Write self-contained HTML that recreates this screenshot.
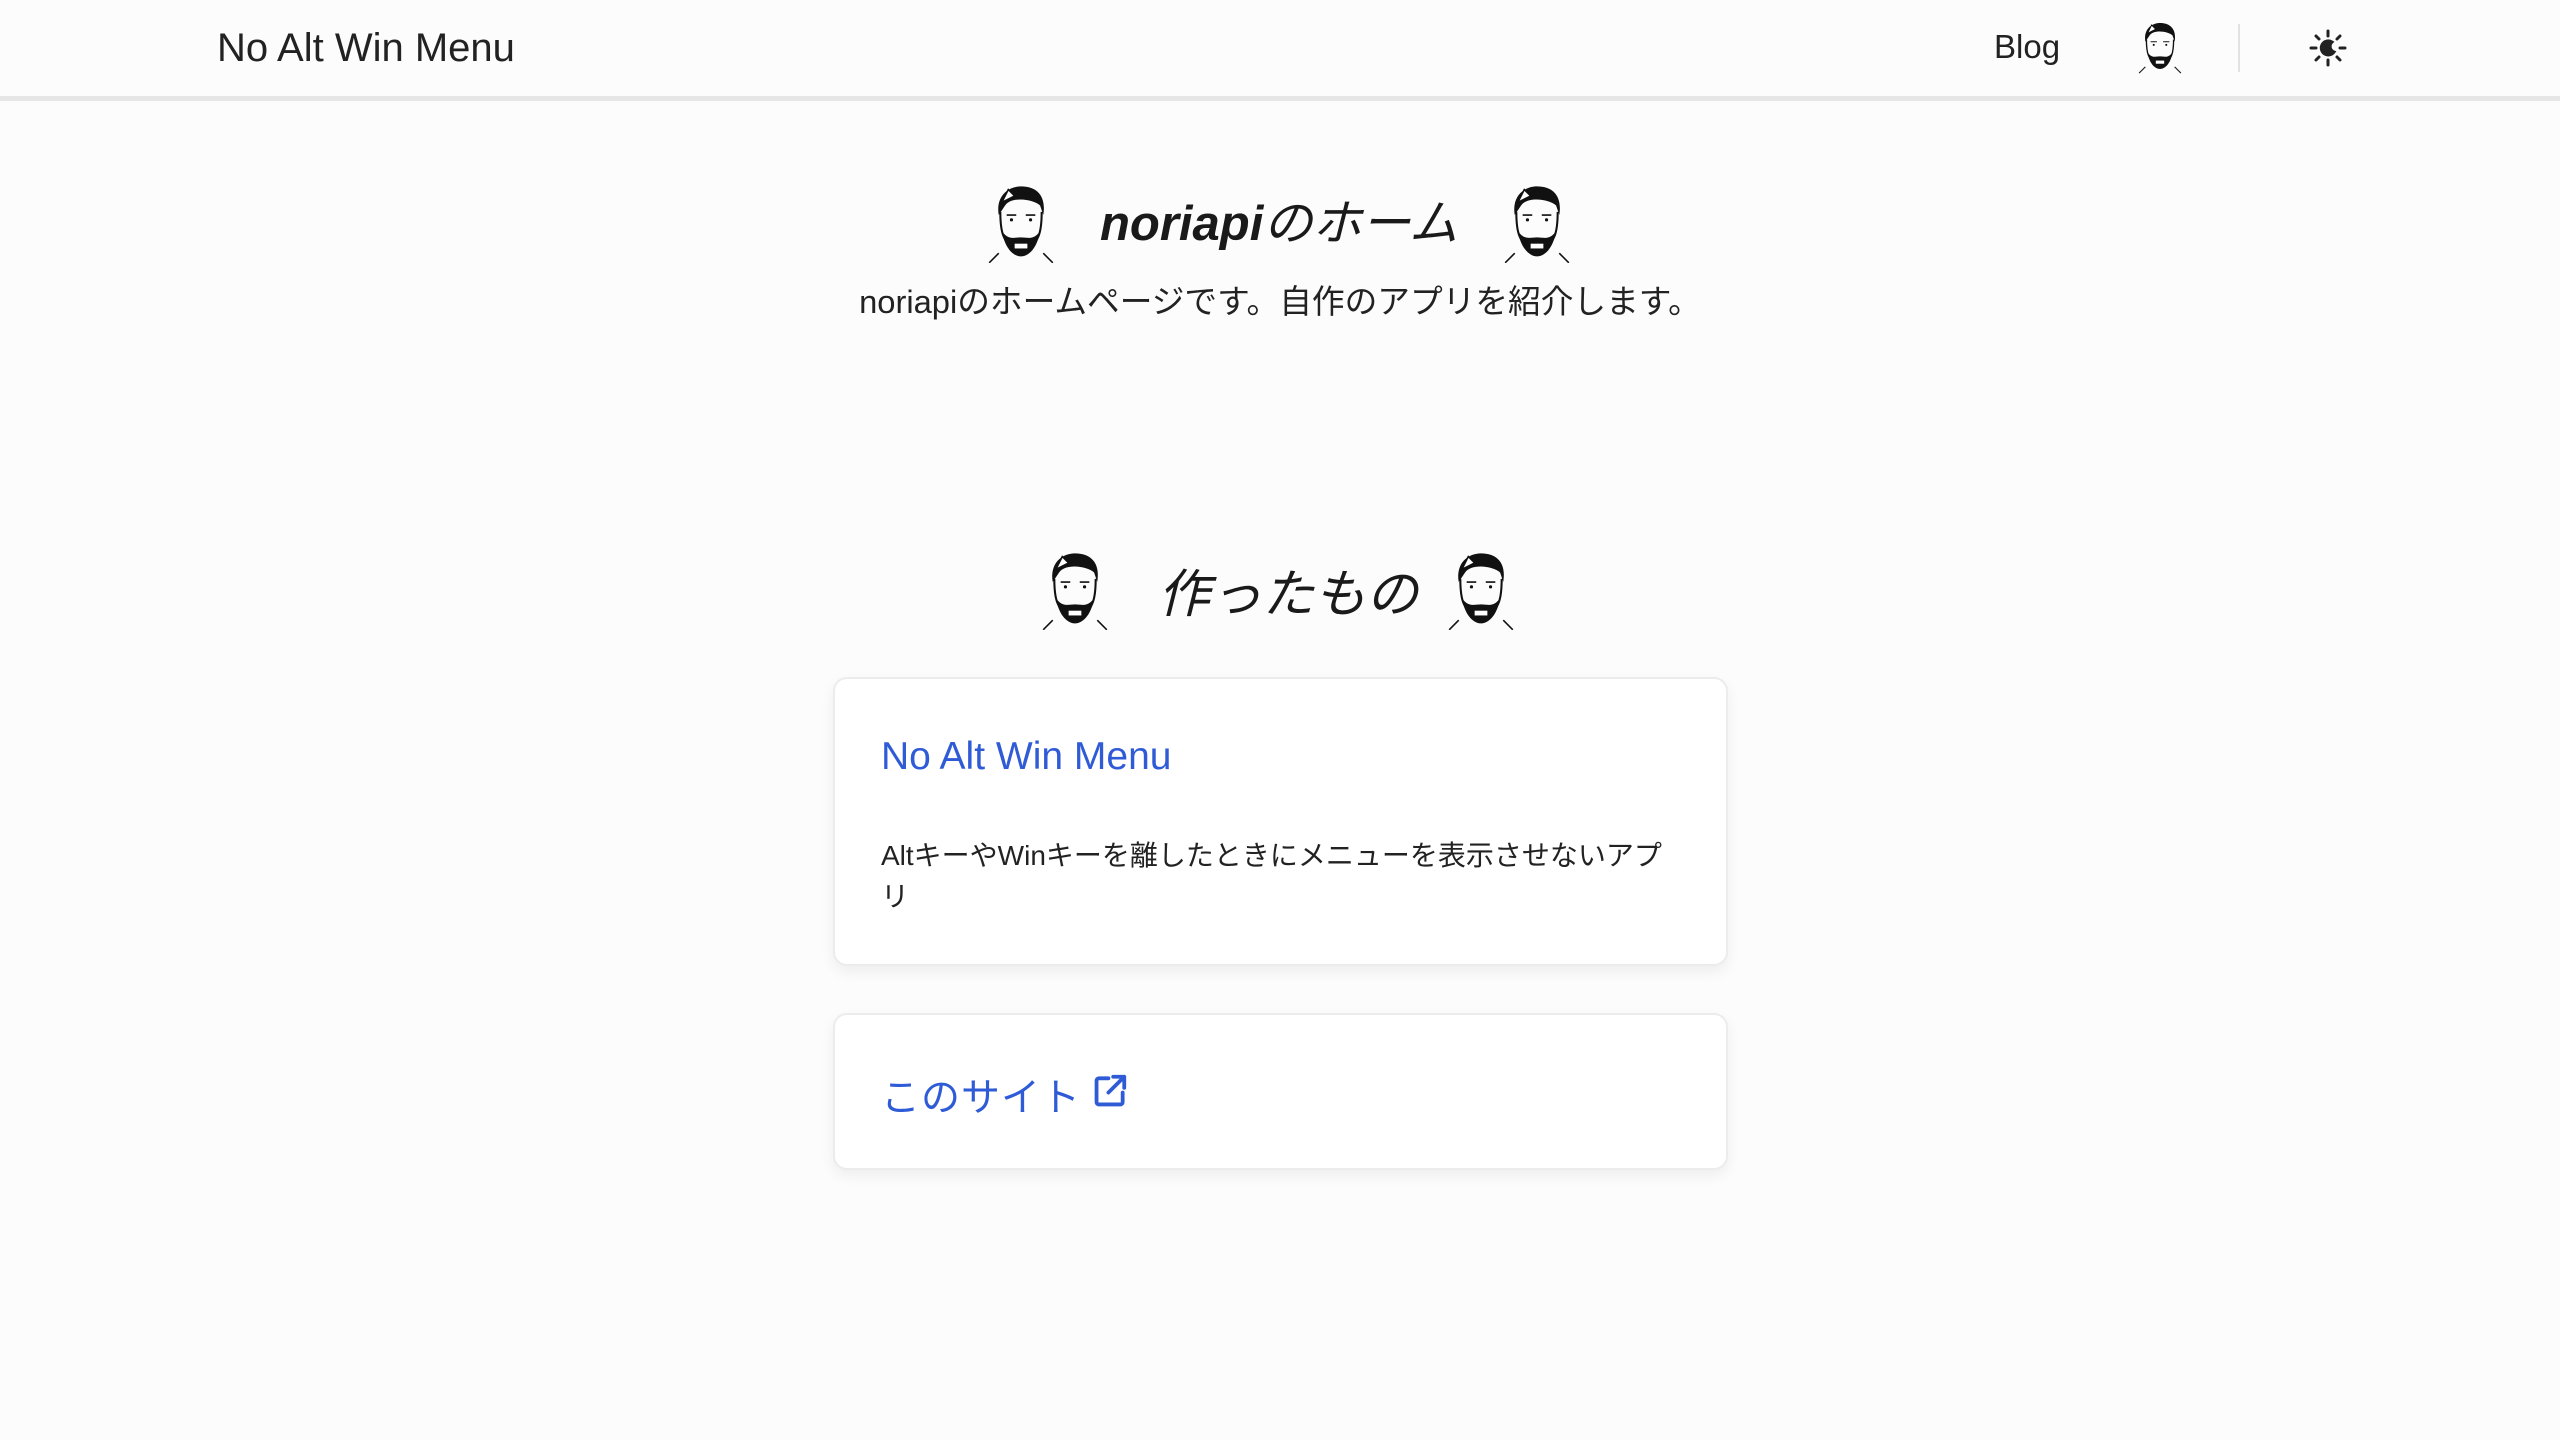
<!DOCTYPE html>
<html><head><meta charset="utf-8"><style>
*{margin:0;padding:0;box-sizing:border-box}
body{width:2560px;height:1440px;background:#fcfcfc;font-family:"Liberation Sans","Noto Sans CJK JP",sans-serif;color:#222;position:relative;overflow:hidden}
.hdr{position:absolute;left:0;top:0;width:2560px;height:101px;border-bottom:5px solid #e6e6e6;background:#fcfcfc}
.abs{position:absolute;white-space:nowrap}
.card{position:absolute;left:833px;width:895px;background:#fff;border:2px solid #ececec;border-radius:14px;box-shadow:0 6px 14px rgba(0,0,0,.06)}
.blue{color:#2f5bd6}
</style></head><body>
<svg width="0" height="0" style="position:absolute"><defs>
<symbol id="face" viewBox="0 0 44 50">
<path d="M8 20 C6 8 14 2 22 2 C32 2 38 8 36 20 L34 14 C30 10 16 8 12 14 Z" fill="#111"/>
<path d="M10 12 L14 4 L18 8 Z" fill="#fff" stroke="#111" stroke-width="1"/>
<path d="M9 18 C9 30 10 38 22 44 C34 38 35 30 35 18" fill="none" stroke="#111" stroke-width="1.3"/>
<path d="M10 30 C12 42 18 46 22 46 C26 46 32 42 34 30 C30 36 26 34 22 34 C18 34 14 36 10 30 Z" fill="#111"/>
<rect x="18" y="38" width="8" height="3" fill="#fff"/>
<circle cx="16" cy="23" r="1" fill="#111"/><circle cx="28" cy="23" r="1" fill="#111"/>
<path d="M13 20 h6 M25 20 h6" stroke="#111" stroke-width="1"/>
<path d="M8 44 L2 50 M36 44 L42 50" stroke="#111" stroke-width="1"/>
</symbol></defs></svg>

<div class="hdr"></div>
<div class="abs" style="left:217px;top:26px;font-size:40px;color:#222">No Alt Win Menu</div>
<div class="abs" style="left:1994px;top:28px;font-size:33px;color:#222">Blog</div>
<svg class="abs" style="left:2137px;top:20px" width="46" height="54"><use href="#face"/></svg>
<div class="abs" style="left:2238px;top:24px;width:2px;height:48px;background:#e2e2e2"></div>
<svg class="abs" style="left:2308px;top:28px" width="40" height="40" viewBox="0 0 40 40" stroke="#222" stroke-width="3" stroke-linecap="round" fill="none">
<path d="M20 3v5M20 32v5M3 20h5M32 20h5M8 8l3 3M29 29l3 3M8 32l3-3M29 11l3-3"/>
<path d="M24 14a7 7 0 1 0 2 10a6 6 0 0 1 -2 -10z" fill="#222"/>
</svg>

<svg class="abs" style="left:986px;top:183px" width="70" height="80"><use href="#face"/></svg>
<div class="abs" style="left:1100px;top:184px;font-size:49px;font-style:italic;color:#1a1a1a"><b>noriapi</b>のホーム</div>
<svg class="abs" style="left:1502px;top:183px" width="70" height="80"><use href="#face"/></svg>
<div class="abs" style="left:0;width:2560px;text-align:center;top:276px;font-size:32.7px;color:#222">noriapiのホームページです。自作のアプリを紹介します。</div>

<svg class="abs" style="left:1040px;top:550px" width="70" height="80"><use href="#face"/></svg>
<div class="abs" style="left:1158px;top:552px;font-size:52px;font-style:italic;color:#1a1a1a">作ったもの</div>
<svg class="abs" style="left:1446px;top:550px" width="70" height="80"><use href="#face"/></svg>

<div class="card" style="top:677px;height:289px">
<div class="abs blue" style="left:46px;top:56px;font-size:39px">No Alt Win Menu</div>
<div class="abs" style="left:46px;top:156px;font-size:28px;line-height:41px;white-space:normal;width:800px;color:#222">AltキーやWinキーを離したときにメニューを表示させないアプ<br>リ</div>
</div>
<div class="card" style="top:1013px;height:157px">
<div class="abs blue" style="left:46px;top:52px;font-size:39px;letter-spacing:1px">このサイト</div>
<svg class="abs" style="left:256px;top:57px" width="38" height="38" viewBox="0 0 24 24" fill="none" stroke="#2f5bd6" stroke-width="2.4" stroke-linecap="round" stroke-linejoin="round"><path d="M11 4H5a1.5 1.5 0 0 0-1.5 1.5v13.5A1.5 1.5 0 0 0 5 20.5h13.5a1.5 1.5 0 0 0 1.5-1.5v-6M14 3h7v7M21 3L11 13"/></svg>
</div>
</body></html>
